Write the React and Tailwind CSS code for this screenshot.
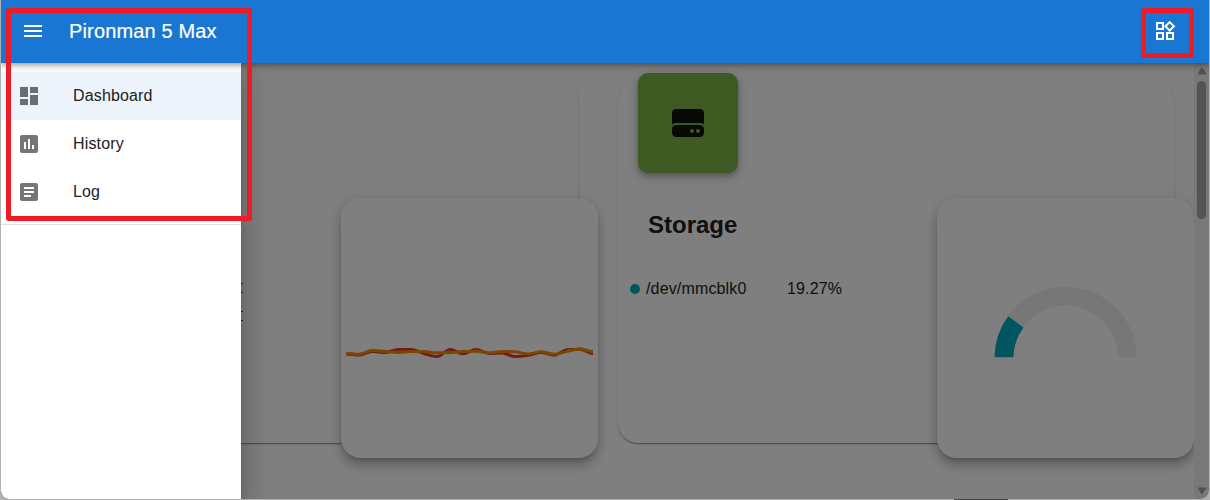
import React from "react";
import { MdMenu, MdDashboard, MdAssessment, MdArticle, MdOutlineWidgets } from "react-icons/md";
import { FaHardDrive } from "react-icons/fa6";

const NAV = [
  { label: "Dashboard", Icon: MdDashboard, selected: true },
  { label: "History", Icon: MdAssessment },
  { label: "Log", Icon: MdArticle },
];

const ORANGE = [155.2, 156.3, 152.5, 153.3, 154.4, 153.5, 153.5, 154.8, 154.6, 153.5, 153.3, 154.8, 153.5, 153.7, 156, 153.8, 156.2, 153.4, 151, 153.5];
const RED = [156, 157, 153.5, 154.5, 151.5, 151.5, 155.5, 158.5, 151.5, 155.8, 151.5, 155.5, 155, 158.5, 157.3, 154.5, 157.3, 151.8, 151.2, 155.5];

// Smooth curve with horizontal tangents at local extremes.
function curve(ys) {
  const step = 13;
  const slope = ys.map((y, i) => {
    if (i === 0 || i === ys.length - 1) return 0;
    const a = y - ys[i - 1];
    const b = ys[i + 1] - y;
    return a * b <= 0 ? 0 : (2 * a * b) / (a + b);
  });
  let d = `M5 ${ys[0]}`;
  for (let i = 1; i < ys.length; i++) {
    const x0 = 5 + (i - 1) * step;
    const x1 = x0 + step;
    d += `C${x0 + step / 3} ${ys[i - 1] + slope[i - 1] / 3} ${x1 - step / 3} ${ys[i] - slope[i] / 3} ${x1} ${ys[i]}`;
  }
  return d;
}

function Card({ children }) {
  return (
    <section className="flex h-[361px] justify-between rounded-[20px] bg-white shadow-[0_2px_1px_-1px_rgba(0,0,0,0.2),0_1px_1px_0_rgba(0,0,0,0.14),0_1px_3px_0_rgba(0,0,0,0.18)]">
      {children}
    </section>
  );
}

function ChartPanel({ children }) {
  return (
    <div className="-mr-5 mt-[116px] h-[260px] w-[257px] shrink-0 rounded-[20px] bg-white shadow-[0_5px_5px_-3px_rgba(0,0,0,0.2),0_8px_10px_1px_rgba(0,0,0,0.14),0_3px_14px_2px_rgba(0,0,0,0.12)]">
      {children}
    </div>
  );
}

function TrendChart() {
  return (
    <svg width="257" height="260" viewBox="0 0 257 260" fill="none" strokeWidth="3">
      <path d={curve(RED)} stroke="#e53935" />
      <path d={curve(ORANGE)} stroke="#fb8c00" />
    </svg>
  );
}

function Gauge() {
  return (
    <svg width="257" height="260" viewBox="0 0 257 260">
      <path d="M57.5 159A71 70 0 0 1 199.5 159H180.500A52 51.500 0 0 0 76.500 159Z" fill="#eee" />
      <path d="M57.500 159.300A71 71 0 0 1 71.200 118.200L86.500 129.500A52 52 0 0 0 76.500 159.300Z" fill="#00acc1" />
    </svg>
  );
}

function AppBar() {
  return (
    <header className="relative z-30 flex h-[63px] items-center bg-[#1976d2] pb-0.5 text-white shadow-[0_2px_4px_-1px_rgba(0,0,0,0.2),0_4px_5px_0_rgba(0,0,0,0.14),0_1px_10px_0_rgba(0,0,0,0.12)]">
      <MdMenu className="ml-5 size-6" />
      <h1 className="ml-6 flex-1 text-xl font-medium tracking-[0.0075em] [-webkit-text-stroke:0.2px_white]">Pironman 5 Max</h1>
      <MdOutlineWidgets className="mr-8 size-6" />
    </header>
  );
}

function Drawer() {
  return (
    <nav className="absolute top-0 bottom-0 left-0 z-20 w-60 rounded-bl-lg bg-white shadow-[0_8px_10px_-5px_rgba(0,0,0,0.2),0_16px_24px_2px_rgba(0,0,0,0.14),0_6px_30px_5px_rgba(0,0,0,0.12)]">
      <ul className="border-b border-[#e0e0e0] pt-[9px] pb-2">
        {NAV.map(({ label, Icon, selected }) => (
          <li key={label} className={selected ? "flex h-12 items-center bg-[#edf4fb] pl-4" : "flex h-12 items-center pl-4"}>
            <Icon className={selected ? "size-6 text-[#6b6e71]" : "size-6 text-[#757575]"} />
            <span className="ml-8 text-base tracking-[0.00938em] text-[#212121]">{label}</span>
          </li>
        ))}
      </ul>
    </nav>
  );
}

function Scrollbar() {
  return (
    <div className="flex w-[15px] shrink-0 flex-col items-center bg-[#f0f0f0] pt-1 pb-1">
      <svg width="10" height="8" viewBox="0 0 10 8"><path d="M5 1L9 7H1Z" fill="#a0a0a0" stroke="#a0a0a0" strokeLinejoin="round" /></svg>
      <div className="mt-1.5 h-[138px] w-[9px] rounded-full bg-[#a8a8a8]" />
      <div className="flex-1" />
      <svg width="10" height="8" viewBox="0 0 10 8"><path d="M5 7L9 1H1Z" fill="#a0a0a0" stroke="#a0a0a0" strokeLinejoin="round" /></svg>
    </div>
  );
}

export default function App() {
  return (
    <div className="relative h-[500px] w-[1210px] overflow-hidden bg-[#b0b0b0] pr-px pb-px pl-px font-['Liberation_Sans',Arial,sans-serif]">
      <div className="flex h-[499px] flex-col overflow-hidden rounded-b-lg bg-white">
        <AppBar />
        <div className="relative flex min-h-0 flex-1">
          <main className="grid min-w-0 flex-1 grid-cols-[556px_556px] content-start gap-x-10 overflow-hidden pt-[19px] pl-[21px]">
            <Card>
              <div className="flex flex-col gap-[18px] pt-[201px] pl-[219px]">
                <div className="flex h-[10px] w-[1.5px] flex-col justify-between"><i className="h-px bg-[#203a60]" /><i className="h-px bg-[#203a60]" /></div>
                <div className="flex h-[10px] w-[1.5px] flex-col justify-between"><i className="h-px bg-[#203a60]" /><i className="h-px bg-[#203a60]" /></div>
              </div>
              <ChartPanel><TrendChart /></ChartPanel>
            </Card>
            <Card>
              <div className="flex flex-col">
                <div className="-mt-[9px] ml-5 flex size-[100px] items-center justify-center rounded-[10px] bg-[#7cb342] shadow-[0_3px_5px_-1px_rgba(0,0,0,0.2),0_5px_8px_0_rgba(0,0,0,0.14),0_1px_14px_0_rgba(0,0,0,0.12)]">
                  <FaHardDrive className="size-8 text-[#0e1408]" />
                </div>
                <h2 className="mt-9 ml-[30px] text-2xl leading-8 font-bold text-[#212121]">Storage</h2>
                <div className="mt-9 ml-3 flex items-center text-base tracking-[0.00938em] text-[#212121]">
                  <span className="mr-1.5 size-2.5 rounded-full bg-[#00acc1]" />
                  <span className="w-[141px]">/dev/mmcblk0</span>
                  <span>19.27%</span>
                </div>
              </div>
              <ChartPanel><Gauge /></ChartPanel>
            </Card>
          </main>
          <Scrollbar />
          <div className="absolute inset-0 z-10 bg-black/50" />
          <Drawer />
        </div>
      </div>
      <div className="absolute top-2 left-1.5 z-40 h-[213px] w-[246px] rounded-[3px] border-5 border-[#ed1c24]" />
      <div className="absolute top-2 left-[1141px] z-40 h-[50px] w-[53px] rounded-[3px] border-5 border-[#ed1c24]" />
      <div className="absolute bottom-0 left-[954px] h-px w-[54px] bg-[#444]" />
    </div>
  );
}
